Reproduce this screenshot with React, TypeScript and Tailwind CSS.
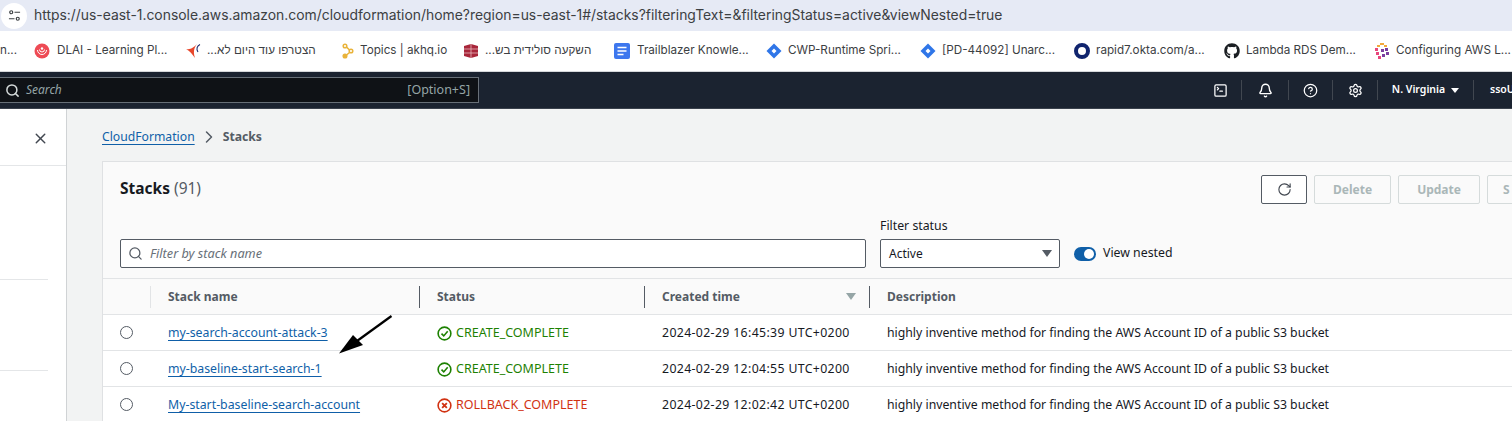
import React from "react";
import { Search, X, ChevronRight, RotateCw, Bell, CircleHelp, Settings, SquareTerminal } from "lucide-react";
import { FaGithub } from "react-icons/fa";

const ui = "font-['Noto_Sans',sans-serif]";

function Bookmark({ icon, label, w, gap = "gap-[6px]" }: { icon: React.ReactNode; label: string; w: string; gap?: string }) {
  return (
    <div className={`flex items-center ${gap} shrink-0 ${w}`}>
      <span className="w-4 h-4 flex items-center justify-center shrink-0">{icon}</span>
      <span dir="auto" className="text-[11.7px] text-[#3c4043] whitespace-nowrap font-['Inter','Noto_Sans',sans-serif]">{label}</span>
    </div>
  );
}

const Jira = () => (
  <svg viewBox="0 0 16 16" className="w-4 h-4">
    <path d="M8 0.5 15.5 8 8 15.5 0.5 8Z" fill="#2f76e8" />
    <path d="M8 5.5 10.5 8 8 10.5 5.5 8Z" fill="#fff" />
  </svg>
);

function NavCell({ w, children }: { w: string; children: React.ReactNode }) {
  return (
    <div className={`${w} h-5 shrink-0 flex items-center justify-center border-r border-[#414750]`}>{children}</div>
  );
}

function Row({ name, ok, status, time }: { name: string; ok: boolean; status: string; time: string }) {
  return (
    <div className="flex h-9 bg-white border-b border-[#e2e4e6] items-center text-[12.3px] text-[#16191f] pt-[2px]">
      <div className="w-12 flex justify-center shrink-0 pr-[2px] -mt-[2px]">
        <span className="w-[13px] h-[13px] rounded-full border border-[#545b64]" />
      </div>
      <div className="w-[269px] pl-[17px] shrink-0">
        <span className="text-[#0f5fa8] underline underline-offset-[3px] decoration-1 whitespace-nowrap">{name}</span>
      </div>
      <div className={`w-[225px] pl-[17px] shrink-0 flex items-center gap-[4px] ${ok ? "text-[#1d8102]" : "text-[#d13212]"}`}>
        {ok ? (
          <svg viewBox="0 0 16 16" className="w-[15px] h-[15px]" fill="none" stroke="currentColor" strokeWidth="1.7">
            <circle cx="8" cy="8" r="6.8" />
            <path d="M4.8 8.2 7.2 10.6 11.4 5.6" />
          </svg>
        ) : (
          <svg viewBox="0 0 16 16" className="w-[15px] h-[15px]" fill="none" stroke="currentColor" strokeWidth="1.7">
            <circle cx="8" cy="8" r="6.8" />
            <path d="M5.5 5.5 10.5 10.5M10.5 5.5 5.5 10.5" strokeWidth="2" />
          </svg>
        )}
        <span className="whitespace-nowrap text-[12.5px]">{status}</span>
      </div>
      <div className="w-[225px] pl-[17px] shrink-0 whitespace-nowrap tracking-[0.35px]">{time}</div>
      <div className="pl-[17px] whitespace-nowrap text-[12.27px]">highly inventive method for finding the AWS Account ID of a public S3 bucket</div>
    </div>
  );
}

function Head({ w, label, children }: { w: string; label: string; children?: React.ReactNode }) {
  return (
    <div className={`${w} shrink-0 h-[22px] pl-[17px] pr-[18px] flex items-center justify-between border-r border-[#545b64]`}>
      <span className="font-bold">{label}</span>
      {children}
    </div>
  );
}

export default function App() {
  return (
    <div className={`relative w-[1512px] h-[421px] overflow-hidden flex flex-col bg-white ${ui}`}>
      <div className="h-[31px] bg-[#e6eaf5] flex items-center shrink-0 relative">
        <span className="w-[26px] h-[26px] ml-[1px] rounded-full bg-white flex items-center justify-center">
          <svg viewBox="0 0 14 14" className="w-[13px] h-[13px]" fill="none" stroke="#3c4043" strokeWidth="1.3">
            <circle cx="3.5" cy="3.5" r="1.6" />
            <path d="M7 3.5H13M1 10.5H7" />
            <circle cx="10.5" cy="10.5" r="1.6" />
          </svg>
        </span>
        <span className="ml-[7px] text-[13.9px] text-[#3c4043] whitespace-nowrap font-['Inter',sans-serif]">
          https://us-east-1.console.aws.amazon.com/cloudformation/home?region=us-east-1#/stacks?filteringText=&filteringStatus=active&viewNested=true
        </span>
      </div>

      <div className="h-[41px] bg-white border-b border-[#d5d7da] flex items-center shrink-0 pl-[34px] overflow-hidden relative">
        <span className="absolute left-0 text-[11.7px] text-[#3c4043] font-['Inter',sans-serif]">n...</span>
        <Bookmark w="w-[151px]" gap="gap-[7px]" label="DLAI - Learning Pl..." icon={
          <svg viewBox="0 0 16 16" className="w-4 h-4"><circle cx="8" cy="8" r="7.5" fill="#ee4b55" /><path d="M3.5 7a4.5 4.5 0 0 0 9 0M5.5 6.5a2.5 2.5 0 0 0 5 0" stroke="#fff" fill="none" /><circle cx="8" cy="5.5" r="1.2" fill="#fff" /></svg>
        } />
        <Bookmark w="w-[155px]" label="הצטרפו עוד היום לא..." icon={
          <svg viewBox="0 0 16 16" className="w-4 h-4" fill="none"><path d="M1 6C6 7 9 4 12 1 9 5 8 9 10 15 7 11 5 8 1 6Z" fill="#e8472b" /><path d="M15 1.5C12 3 11 6 13 9" stroke="#1d2a6d" strokeWidth="1.1" /></svg>
        } />
        <Bookmark w="w-[123px]" gap="gap-[4px]" label="Topics | akhq.io" icon={
          <svg viewBox="0 0 16 16" className="w-4 h-4" fill="none" stroke="#e9b33a" strokeWidth="1.5"><circle cx="5" cy="3" r="1.8" /><circle cx="11" cy="8" r="1.8" /><circle cx="5" cy="13" r="1.8" fill="#e9b33a" /><path d="M6.5 4 9.5 7M9.5 9.5 6.5 12" /></svg>
        } />
        <Bookmark w="w-[151px]" label="השקעה סולידית בש..." icon={
          <svg viewBox="0 0 16 16" className="w-4 h-4"><path d="M1 3 8 1l7 2v10l-7 2-7-2Z" fill="#a8263a" /><path d="M1 6h14M1 10h14M8 1v14" stroke="#e4b7bd" strokeWidth=".8" /></svg>
        } />
        <Bookmark w="w-[152px]" gap="gap-[7px]" label="Trailblazer Knowle..." icon={
          <svg viewBox="0 0 16 16" className="w-4 h-4"><rect x="0" y="0" width="16" height="16" rx="2" fill="#3d77ee" /><path d="M3.5 4.5h9M3.5 8h9M3.5 11.5h6" stroke="#fff" strokeWidth="1.5" /></svg>
        } />
        <Bookmark w="w-[154px]" label="CWP-Runtime Spri..." icon={<Jira />} />
        <Bookmark w="w-[154px]" label="[PD-44092] Unarc..." icon={<Jira />} />
        <Bookmark w="w-[150px]" label="rapid7.okta.com/a..." icon={
          <span className="w-4 h-4 rounded-full border-[4px] border-[#10246e] block" />
        } />
        <Bookmark w="w-[150px]" label="Lambda RDS Dem..." icon={<FaGithub className="w-4 h-4 text-[#1b1f23]" />} />
        <Bookmark w="w-[138px]" label="Configuring AWS L..." icon={
          <svg viewBox="0 0 16 16" className="w-4 h-4"><g fill="#f2a93b"><rect x="6" y="0" width="4" height="2" /><rect x="3" y="2" width="3" height="2" /><rect x="10" y="2" width="3" height="2" /></g><g fill="#e8467c"><rect x="1" y="5" width="3" height="3" /><rect x="2" y="9" width="3" height="3" /><rect x="4" y="13" width="3" height="3" /></g><g fill="#7b3fa0"><rect x="7" y="6" width="3" height="3" /><rect x="11" y="5" width="3" height="3" /><rect x="8" y="11" width="3" height="3" /><rect x="12" y="9" width="3" height="3" /></g></svg>
        } />
      </div>

      <div className="h-[37px] bg-[#1b2330] flex items-center shrink-0 border-b border-[#3a414c] relative overflow-hidden">
        <div className="ml-[-2px] w-[481px] h-[26px] shrink-0 bg-[#0f1216] border border-[#687078] flex items-center pl-[6px] pr-2 text-[12px]">
          <Search className="w-[15px] h-[15px] text-[#d5dbdb]" strokeWidth={2.4} />
          <span className="ml-[6px] italic text-[#95a5a6]">Search</span>
          <span className="ml-auto text-[12.5px] text-[#95a5a6]">[Option+S]</span>
        </div>
        <div className="ml-[720px] flex items-center text-white shrink-0">
          <NavCell w="w-[43px]"><SquareTerminal className="w-[15px] h-[15px]" strokeWidth={2} /></NavCell>
          <NavCell w="w-[47px]"><Bell className="w-[15px] h-[15px]" strokeWidth={2.2} /></NavCell>
          <NavCell w="w-[44px]"><CircleHelp className="w-[15px] h-[15px]" strokeWidth={2} /></NavCell>
          <NavCell w="w-[45px]"><Settings className="w-[15px] h-[15px]" strokeWidth={2} /></NavCell>
          <NavCell w="w-[96px]">
            <span className="flex items-center gap-[6px] text-[10.5px] font-semibold whitespace-nowrap">
              N. Virginia
              <span className="w-0 h-0 border-x-[4px] border-x-transparent border-t-[5px] border-t-white" />
            </span>
          </NavCell>
          <span className="ml-[16px] text-[10.5px] font-semibold whitespace-nowrap">ssoU</span>
        </div>
      </div>

      <div className="flex-1 flex min-h-0 bg-[#f2f3f3]">
        <aside className="w-[67px] shrink-0 bg-white border-r border-[#d0d3d5] flex flex-col">
          <div className="h-[57px] shrink-0 border-b border-[#e4e6e8] flex items-center justify-end pr-[17px] pt-[3px]">
            <X className="w-[17px] h-[17px] text-[#414750]" strokeWidth={2} />
          </div>
          <div className="h-[114px] shrink-0 w-12 border-b border-[#e4e6e8]" />
          <div className="h-[91px] shrink-0 w-12 border-b border-[#e4e6e8]" />
        </aside>
        <main className="flex-1 min-w-0 pl-[35px] flex flex-col">
          <div className="h-[52px] flex items-center text-[12.2px] shrink-0 pt-[4px]">
            <span className="text-[#0f5fa8] underline underline-offset-[3px] decoration-1">CloudFormation</span>
            <ChevronRight className="w-5 h-5 text-[#545b64] mx-[4px]" strokeWidth={1.8} />
            <span className="font-bold text-[#545b64]">Stacks</span>
          </div>
          <section className="flex-1 w-[1450px] bg-[#fafafa] border-l border-t border-[#dfe1e3] flex flex-col text-[#16191f]">
            <div className="h-[117px] shrink-0 border-b border-[#e2e4e6] pl-[17px] relative flex flex-col">
              <div className="flex items-start">
                <h1 className="mt-[14px] w-[90px] text-[15.5px] leading-[24px] font-bold whitespace-nowrap">Stacks <span className="font-normal text-[#545b64]">(91)</span></h1>
                <div className="ml-[1060px] mt-[13px] flex gap-[7px] text-[12px] font-bold shrink-0">
                  <span className="w-[46px] h-[29px] bg-white border border-[#545b64] rounded-[2px] flex items-center justify-center">
                    <RotateCw className="w-[15px] h-[15px] text-[#414750]" strokeWidth={1.8} />
                  </span>
                  <span className="w-[77px] h-[29px] border border-[#d5dbdb] rounded-[2px] flex items-center justify-center text-[#aab7b8]">Delete</span>
                  <span className="w-[82px] h-[29px] border border-[#d5dbdb] rounded-[2px] flex items-center justify-center text-[#aab7b8]">Update</span>
                  <span className="w-[120px] h-[29px] border border-[#d5dbdb] rounded-[2px] flex items-center justify-start pl-[15px] text-[#aab7b8]">S</span>
                </div>
              </div>
              <div className="flex items-end mt-[14px]">
                <div className="w-[746px] h-[29px] bg-white border border-[#545b64] rounded-[2px] flex items-center pl-[7px] text-[12.7px]">
                  <Search className="w-[15px] h-[15px] text-[#545b64]" strokeWidth={2} />
                  <span className="ml-[7px] italic text-[#687078]">Filter by stack name</span>
                </div>
                <div className="ml-[14px] w-[180px]">
                  <div className="text-[12.3px] leading-[16px] mb-[5px]">Filter status</div>
                  <div className="h-[29px] bg-white border border-[#545b64] rounded-[2px] flex items-center justify-between pl-[8px] pr-[7px] text-[12px]">
                    Active
                    <span className="w-0 h-0 border-x-[5px] border-x-transparent border-t-[7px] border-t-[#545b64]" />
                  </div>
                </div>
                <div className="ml-[14px] h-[29px] flex items-center gap-[7px] text-[12.3px]">
                  <span className="w-[22px] h-[14px] rounded-full bg-[#0f5fa8] flex items-center justify-end pr-[2px]">
                    <span className="w-[10px] h-[10px] rounded-full bg-white" />
                  </span>
                  View nested
                </div>
              </div>
            </div>
            <div className="h-[36px] shrink-0 flex items-center border-b border-[#e2e4e6] text-[12px] text-[#545b64]">
              <div className="w-12 h-[22px] shrink-0 border-r border-[#e2e4e6]" />
              <Head w="w-[269px]" label="Stack name" />
              <Head w="w-[225px]" label="Status" />
              <Head w="w-[225px]" label="Created time">
                <span className="w-0 h-0 border-x-[5px] border-x-transparent border-t-[7px] border-t-[#95a5a6] -mr-[5px]" />
              </Head>
              <div className="pl-[17px] font-bold">Description</div>
            </div>
            <Row name="my-search-account-attack-3" ok status="CREATE_COMPLETE" time="2024-02-29 16:45:39 UTC+0200" />
            <Row name="my-baseline-start-search-1" ok status="CREATE_COMPLETE" time="2024-02-29 12:04:55 UTC+0200" />
            <Row name="My-start-baseline-search-account" ok={false} status="ROLLBACK_COMPLETE" time="2024-02-29 12:02:42 UTC+0200" />
          </section>
        </main>
      </div>

      <svg className="absolute left-[335px] top-[312px] w-[60px] h-[46px]" viewBox="0 0 60 46">
        <path d="M56.5 4 22 29" stroke="#000" strokeWidth="2.2" />
        <path d="M4 41.5 18 23 28 33Z" fill="#000" />
      </svg>
    </div>
  );
}
